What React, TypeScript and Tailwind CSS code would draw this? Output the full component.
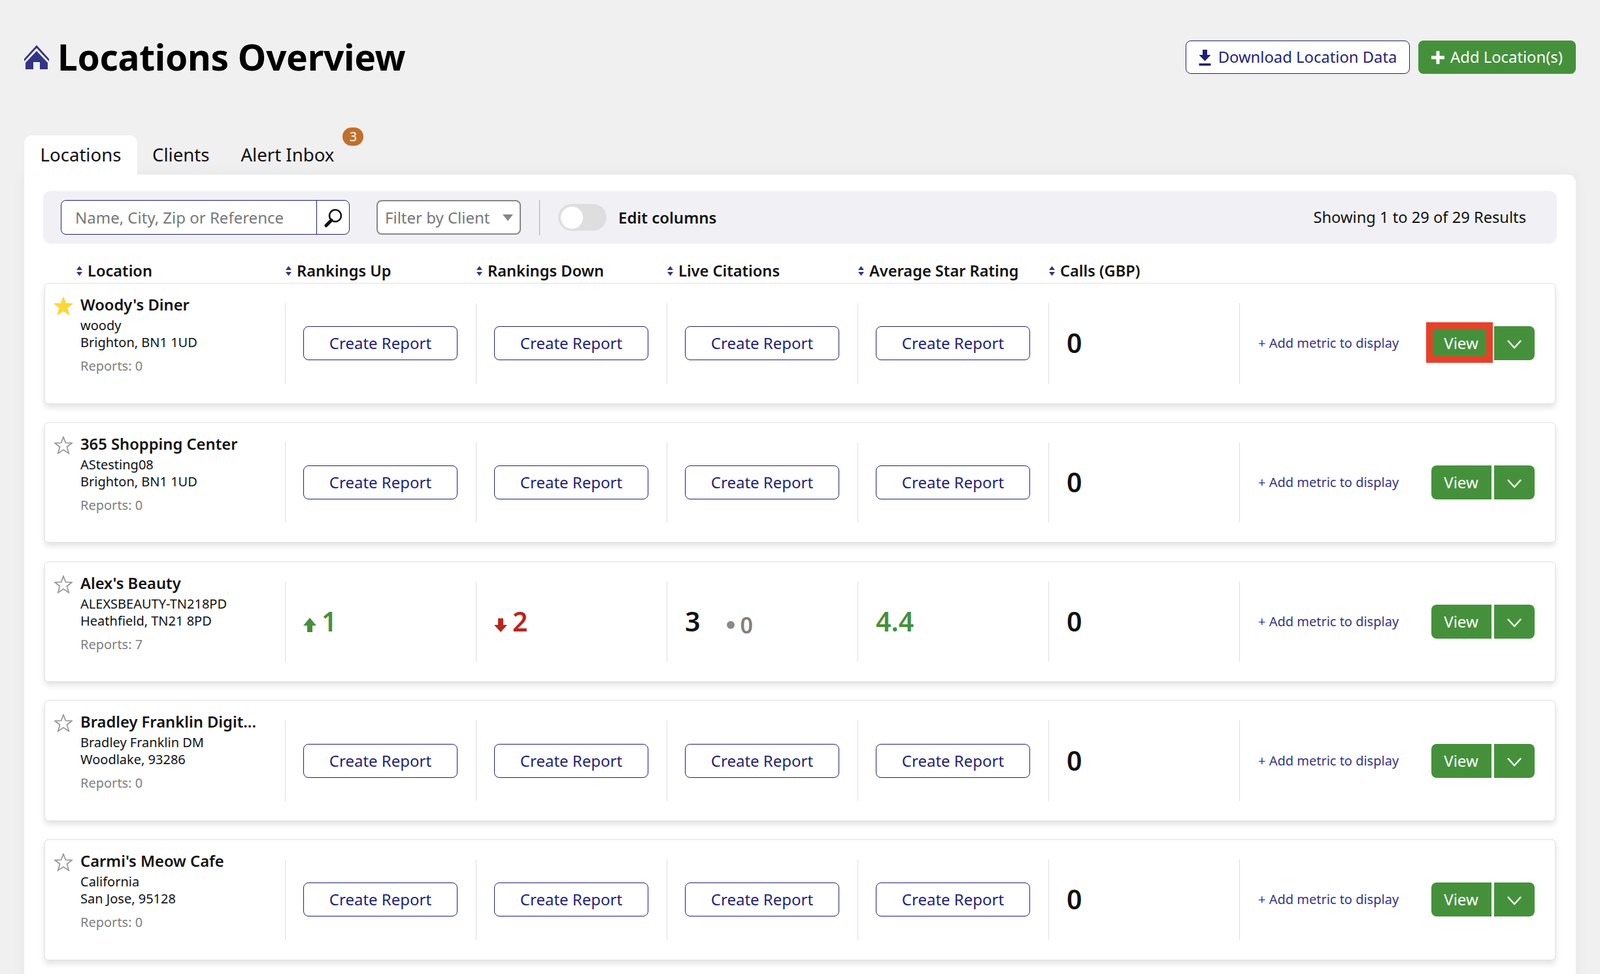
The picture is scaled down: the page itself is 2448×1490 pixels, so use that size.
import { ReactNode } from "react";

interface Row {
  name: string;
  ref: string;
  city: string;
  reports: number;
  starred?: boolean;
  hasData?: boolean;
  highlight?: boolean;
}

const rows: Row[] = [
  { name: "Woody's Diner", ref: "woody", city: "Brighton, BN1 1UD", reports: 0, starred: true, highlight: true },
  { name: "365 Shopping Center", ref: "AStesting08", city: "Brighton, BN1 1UD", reports: 0 },
  { name: "Alex's Beauty", ref: "ALEXSBEAUTY-TN218PD", city: "Heathfield, TN21 8PD", reports: 7, hasData: true },
  { name: "Bradley Franklin Digit...", ref: "Bradley Franklin DM", city: "Woodlake, 93286", reports: 0 },
  { name: "Carmi's Meow Cafe", ref: "California", city: "San Jose, 95128", reports: 0 },
];

const columns = [
  { label: "Location", width: "w-[320px]" },
  { label: "Rankings Up", width: "w-[292px]" },
  { label: "Rankings Down", width: "w-[292px]" },
  { label: "Live Citations", width: "w-[292px]" },
  { label: "Average Star Rating", width: "w-[292px]" },
  { label: "Calls (GBP)", width: "w-[292px]" },
];

const HouseIcon = () => (
  <svg width="38" height="37" viewBox="0 0 38 37" fill="#343487">
    <path d="M19 0 L38 21 L38 25 L19 4.5 L0 25 L0 21 Z" />
    <path d="M19 9 L36 27 L36 37 L24 37 L24 26 L14 26 L14 37 L2 37 L2 27 Z" />
  </svg>
);

const SortIcon = () => (
  <svg width="9" height="15" viewBox="0 0 9 15" fill="#343487" className="shrink-0">
    <path d="M4.5 0 L9 6 L0 6 Z" />
    <path d="M4.5 15 L9 9 L0 9 Z" />
  </svg>
);

const StarIcon = ({ filled }: { filled?: boolean }) => (
  <svg width="28" height="28" viewBox="0 0 28 28" className="shrink-0">
    <path
      d="M14 1.5 L17.4 10.4 L27 10.8 L19.5 16.7 L22.2 26.5 L14 21 L5.8 26.5 L8.5 16.7 L1 10.8 L10.6 10.4 Z"
      fill={filled ? "#fdd835" : "#ffffff"}
      stroke={filled ? "#fdd835" : "#9a9a9a"}
      strokeWidth="1.8"
      strokeLinejoin="miter"
    />
  </svg>
);

const ArrowUp = () => (
  <svg width="20" height="22" viewBox="0 0 20 22" fill="#45913b">
    <path d="M10 0 L20 12 L14 12 L14 22 L6 22 L6 12 L0 12 Z" />
  </svg>
);

const ArrowDown = () => (
  <svg width="20" height="21" viewBox="0 0 20 21" fill="#b9261b">
    <path d="M6 0 L14 0 L14 10 L20 10 L10 21 L0 10 L6 10 Z" />
  </svg>
);

const Cell = ({ children }: { children: ReactNode }) => (
  <div className="my-[30px] flex items-center border-l border-[#dedede] pl-[27px]">{children}</div>
);

const CreateReport = () => (
  <button className="h-[52px] w-[236px] rounded-lg border-[1.5px] border-[#1f1f7a] bg-white text-[24px] text-[#1f1f7a]">
    Create Report
  </button>
);

const LocationRow = ({ row }: { row: Row }) => (
  <div className="grid h-[184.5px] grid-cols-[367px_292px_292px_292px_292px_292px_1fr] rounded-md border border-[#e2e2e2] bg-white shadow-[0_5px_10px_rgba(0,0,0,0.12)]">
    <div className="flex gap-[12px] pl-[14px] pt-[15px]">
      <div className="pt-[5px]">
        <StarIcon filled={row.starred} />
      </div>
      <div>
        <div className="text-[23.75px] font-semibold leading-[34px] text-[#111]">{row.name}</div>
        <div className="mt-[2px] text-[20px] leading-[26px] text-[#111]">{row.ref}</div>
        <div className="text-[20px] leading-[26px] text-[#111]">{row.city}</div>
        <div className="mt-[10px] text-[20px] leading-[26px] text-[#808080]">Reports: {row.reports}</div>
      </div>
    </div>

    {row.hasData ? (
      <>
        <Cell>
          <div className="-mt-[2px] flex items-end gap-[8px] text-[41px] font-semibold leading-[56px] text-[#45913b]">
            <span className="mb-[11px]">
              <ArrowUp />
            </span>
            1
          </div>
        </Cell>
        <Cell>
          <div className="-mt-[2px] flex items-end gap-[8px] text-[41px] font-semibold leading-[56px] text-[#b9261b]">
            <span className="mb-[11px]">
              <ArrowDown />
            </span>
            2
          </div>
        </Cell>
        <Cell>
          <div className="-mt-[2px] flex items-center text-[41px] font-semibold leading-[56px] text-[#111]">
            3
            <span className="ml-[41px] mr-[8px] mt-[12px] h-[12px] w-[12px] rounded-full bg-[#8a8a8a]" />
            <span className="mt-[12px] text-[34px] text-[#808080]">0</span>
          </div>
        </Cell>
        <Cell>
          <div className="-mt-[2px] text-[41px] font-semibold leading-[56px] text-[#45913b]">4.4</div>
        </Cell>
      </>
    ) : (
      <>
        <Cell>
          <CreateReport />
        </Cell>
        <Cell>
          <CreateReport />
        </Cell>
        <Cell>
          <CreateReport />
        </Cell>
        <Cell>
          <CreateReport />
        </Cell>
      </>
    )}

    <Cell>
      <div className="-mt-[2px] text-[41px] font-semibold leading-[56px] text-[#111]">0</div>
    </Cell>

    <div className="my-[30px] flex items-center justify-between border-l border-[#dedede] pl-[28px] pr-[31.5px]">
      <span className="text-[20px] text-[#343487]">+ Add metric to display</span>
      <div className="flex gap-[4px]">
        <div className="relative">
          <button className="h-[52px] w-[92px] rounded-l-lg bg-[#45913b] text-[24px] text-white">View</button>
          {row.highlight && (
            <div className="absolute left-[-8px] top-[-6px] h-[62px] w-[102px] border-[10px] border-[#e9402a]" />
          )}
        </div>
        <button className="flex h-[52px] w-[62px] items-center justify-center rounded-r-lg bg-[#45913b] pt-[4px]">
          <svg width="22" height="14" viewBox="0 0 22 14" fill="none" stroke="#fff" strokeWidth="2.4">
            <path d="M1 1 L11 12 L21 1" />
          </svg>
        </button>
      </div>
    </div>
  </div>
);

export default function App() {
  return (
    <div className="h-[1490px] overflow-hidden bg-[#f0f0f1] pl-[37px] pr-[37px] pt-[62px] font-['Open_Sans',sans-serif] text-[#111]">
      <div className="flex h-[51px] items-center justify-between">
        <div className="flex items-center gap-[13px]">
          <HouseIcon />
          <h1 className="-mt-[2px] font-['Inter',sans-serif] text-[55px] font-bold leading-[51px] tracking-[-0.3px] text-black">
            Locations Overview
          </h1>
        </div>
        <div className="flex gap-[13px]">
          <button className="flex h-[51px] w-[343px] items-center justify-center gap-[11px] rounded-lg border-[1.5px] border-[#1f1f7a] bg-white text-[23.8px] text-[#1f1f7a]">
            <svg width="19" height="27" viewBox="0 0 19 27" fill="#1f1f7a">
              <path d="M6 2 L13 2 L13 10 L18.5 10 L9.5 19.5 L0.5 10 L6 10 Z" />
              <rect x="0.5" y="23" width="18" height="3.5" />
            </svg>
            Download Location Data
          </button>
          <button className="flex h-[51px] w-[241px] items-center justify-center gap-[9px] rounded-lg bg-[#45913b] text-[23.8px] text-white">
            <svg width="20" height="20" viewBox="0 0 20 20" fill="#fff">
              <rect x="7.5" y="0" width="5" height="20" />
              <rect x="0" y="7.5" width="20" height="5" />
            </svg>
            Add Location(s)
          </button>
        </div>
      </div>

      <div className="mt-[94px] flex items-stretch text-[27.6px]">
        <div className="flex h-[60px] w-[173px] items-center justify-center rounded-t-xl bg-white pb-[1px]">Locations</div>
        <div className="ml-[23px] flex h-[60px] items-center pb-[1px]">Clients</div>
        <div className="relative ml-[48px] flex h-[60px] items-center pb-[1px]">
          Alert Inbox
          <span className="absolute right-[-45px] top-[-12px] flex h-[28px] w-[32px] items-center justify-center rounded-full bg-[#c0702a] text-[20px] text-white">
            3
          </span>
        </div>
      </div>

      <div className="h-[1300px] rounded-tr-xl bg-white px-[29px] pt-[25px] shadow-[0_0_20px_rgba(0,0,0,0.05)]">
        <div className="flex h-[81px] items-center rounded-xl bg-[#f1f1f5] pl-[27px] pr-[47px]">
          <div className="flex h-[53px] w-[442px] rounded-lg border-[1.5px] border-[#1f1f7a] bg-white">
            <div className="flex flex-1 items-center pl-[21px] text-[24px] text-[#777]">Name, City, Zip or Reference</div>
            <div className="flex w-[50px] items-center justify-center border-l-[1.5px] border-[#1f1f7a]">
              <svg width="30" height="30" viewBox="0 0 30 30" fill="none">
                <circle cx="18" cy="12" r="9" stroke="#111" strokeWidth="2.6" />
                <path d="M12 19 L4 27" stroke="#111" strokeWidth="5" strokeLinecap="round" />
              </svg>
            </div>
          </div>
          <div className="ml-[41px] flex h-[53px] w-[221px] items-center justify-between rounded-lg border-2 border-[#888] bg-white pl-[11px] pr-[10px] text-[24px] text-[#777]">
            Filter by Client
            <svg width="16" height="10" viewBox="0 0 16 10" fill="#888">
              <path d="M0 0 L16 0 L8 10 Z" />
            </svg>
          </div>
          <div className="ml-[28px] h-[54px] w-[1px] bg-[#aaaaaa]" />
          <div className="ml-[28px] h-[41px] w-[74px] rounded-full bg-[#dedede] p-[3.5px]">
            <div className="h-[34px] w-[34px] rounded-full bg-white" />
          </div>
          <span className="ml-[18px] text-[24px] font-semibold">Edit columns</span>
          <span className="ml-auto text-[23.7px]">Showing 1 to 29 of 29 Results</span>
        </div>

        <div className="mt-[24px] flex h-[36px] items-center pl-[51px]">
          {columns.map((c) => (
            <div key={c.label} className={`flex items-center gap-[8px] text-[23.6px] font-semibold ${c.width}`}>
              <SortIcon />
              {c.label}
            </div>
          ))}
        </div>

        <div className="mx-[2px] flex w-[2312px] flex-col gap-[28.25px]">
          {rows.map((row) => (
            <LocationRow key={row.name} row={row} />
          ))}
        </div>
      </div>
    </div>
  );
}
